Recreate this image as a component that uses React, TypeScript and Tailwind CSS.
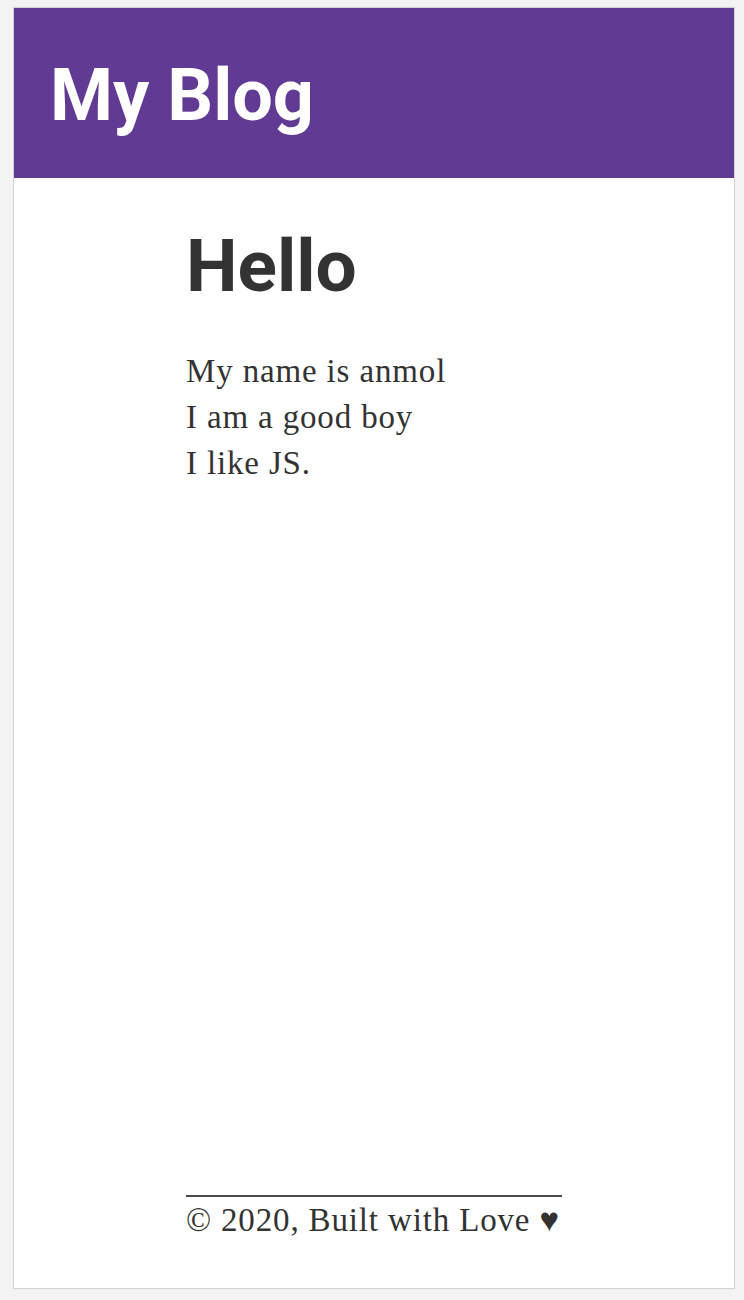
const App = () => {
  return (
    <div className="min-h-screen bg-[#f3f3f3] pt-[7px] pb-[11px]">
      <div className="ml-[13px] w-[722px] h-[1282px] border border-[#d3d3d3] bg-white flex flex-col">
        <header className="h-[170px] bg-[#613a93] pt-[52px] pl-[36px]">
          <h1
            className="text-[72px] leading-[72px] font-bold text-white"
            style={{ fontFamily: "Roboto, 'Liberation Sans', sans-serif" }}
          >
            My Blog
          </h1>
        </header>
        <main className="mx-auto w-[376px] flex-1 pt-[52px] text-[#333]">
          <h2
            className="text-[73px] leading-[73px] font-bold"
            style={{ fontFamily: "Roboto, 'Liberation Sans', sans-serif" }}
          >
            Hello
          </h2>
          <p
            className="mt-[45px] text-[33px] leading-[46px] tracking-[0.85px]"
            style={{ fontFamily: "'Liberation Serif', Georgia, serif" }}
          >
            My name is anmol
            <br />
            I am a good boy
            <br />
            I like JS.
          </p>
        </main>
        <footer
          className="mx-auto w-[376px] border-t-2 border-[#4a4a4a] pb-[45px] text-[33px] leading-[46px] tracking-[0.85px] text-[#333] whitespace-nowrap"
          style={{ fontFamily: "'Liberation Serif', Georgia, serif" }}
        >
          © 2020, Built with Love ♥
        </footer>
      </div>
    </div>
  );
};

export default App;
